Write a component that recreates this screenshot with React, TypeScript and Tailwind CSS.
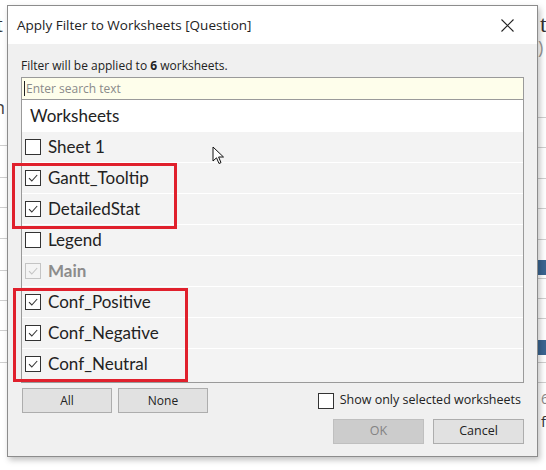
import React from 'react';

type Sheet = { name: string; checked: boolean; disabled?: boolean };

const sheets: Sheet[] = [
  { name: 'Sheet 1', checked: false },
  { name: 'Gantt_Tooltip', checked: true },
  { name: 'DetailedStat', checked: true },
  { name: 'Legend', checked: false },
  { name: 'Main', checked: true, disabled: true },
  { name: 'Conf_Positive', checked: true },
  { name: 'Conf_Negative', checked: true },
  { name: 'Conf_Neutral', checked: true },
];

const Check = ({ checked, disabled }: { checked: boolean; disabled?: boolean }) => (
  <span
    className={`flex h-[16px] w-[16px] shrink-0 items-center justify-center border ${
      disabled ? 'border-[#c4c4c4] bg-[#f4f4f4]' : 'border-[#333] bg-white'
    }`}
  >
    {checked && (
      <svg width="12" height="12" viewBox="0 0 12 12">
        <path d="M2 6.2 L4.8 9 L10.2 3" fill="none" stroke={disabled ? '#c4c4c4' : '#333'} strokeWidth="1.1" />
      </svg>
    )}
  </span>
);

const leftLines = [145, 177, 207, 238, 270, 300, 330, 362];
const rightLines = [117, 147, 178, 208, 239, 278, 298, 318, 362, 382];

export default function App() {
  return (
    <div className="relative h-[470px] w-[546px] overflow-hidden bg-white font-['Open_Sans',sans-serif] text-[#1a1a1a]">
      {/* worksheet behind the dialog */}
      <span className="absolute left-[-4px] top-[12px] font-['Liberation_Serif',serif] text-[24px] leading-none text-[#333]">t</span>
      <span className="absolute left-[-6px] top-[98px] text-[18px] leading-none text-[#444]">n</span>
      <span className="absolute left-[540px] top-[12px] font-['Liberation_Serif',serif] text-[24px] leading-none text-[#333]">t</span>
      <span className="absolute left-[538px] top-[38px] text-[18px] leading-none text-[#999]">)</span>
      <span className="absolute left-[541px] top-[392px] text-[14px] leading-none text-[#888]">6</span>
      <span className="absolute left-[541px] top-[414px] text-[15px] leading-none text-[#333]">f</span>
      {leftLines.map((y) => (
        <div key={`l${y}`} className="absolute left-0 h-px w-[8px] bg-[#cfcfcf]" style={{ top: y }} />
      ))}
      {rightLines.map((y) => (
        <div key={`r${y}`} className="absolute left-[538px] h-px w-[8px] bg-[#cfcfcf]" style={{ top: y }} />
      ))}
      <div className="absolute left-[538px] top-[260px] h-[15px] w-[8px] bg-[#3a6591]" />
      <div className="absolute left-[538px] top-[340px] h-[15px] w-[8px] bg-[#3a6591]" />

      {/* dialog */}
      <div className="absolute left-[7px] top-[5px] flex h-[452px] w-[531px] flex-col border border-[#8c8c8c] bg-[#f0f0f0] shadow-[2px_3px_6px_rgba(0,0,0,0.25)]">
        <div className="flex h-[38px] items-center justify-between bg-white pl-[9px] pr-[23px]">
          <span className="text-[13.5px] text-[#222]">Apply Filter to Worksheets [Question]</span>
          <svg width="13" height="13" viewBox="0 0 13 13">
            <path d="M0.5 0.5 L12.5 12.5 M12.5 0.5 L0.5 12.5" stroke="#222" strokeWidth="1.1" />
          </svg>
        </div>

        <div className="flex flex-1 flex-col px-[13px] pt-[13px]">
          <div className="h-[18px] text-[12px] leading-[18px] text-[#222]">
            Filter will be applied to <b>6</b> worksheets.
          </div>

          <div className="mt-[2px] flex flex-col border border-[#9a9a9a]">
            <div className="flex h-[22px] items-center border-b border-[#9a9a9a] bg-[#fefeeb] pl-[2px] text-[12px] text-[#8a8a8a]">
              <span className="mr-[1px] h-[15px] w-px bg-[#222]" />
              Enter search text
            </div>
            <div className="h-[282px] bg-[#f3f3f3] font-['Lato',sans-serif]">
              <div className="flex h-[31px] items-center bg-white pl-[8px] text-[17px] text-[#222]">Worksheets</div>
              {sheets.map((s) => (
                <div key={s.name} className="flex h-[31px] items-center gap-[7px] border-t border-white pl-[3px] text-[17px]">
                  <Check checked={s.checked} disabled={s.disabled} />
                  <span className={s.disabled ? 'font-bold text-[#8c8c8c]' : 'text-[#222]'}>{s.name}</span>
                </div>
              ))}
            </div>
          </div>

          <div className="mt-[5px] flex items-center justify-between">
            <div className="flex gap-[6px] pl-[1px]">
              <button className="h-[25px] w-[90px] border border-[#adadad] bg-[#e1e1e1] text-[12px] text-[#222]">All</button>
              <button className="h-[25px] w-[90px] border border-[#adadad] bg-[#e1e1e1] text-[12px] text-[#222]">None</button>
            </div>
            <div className="flex items-center gap-[6px] pr-[3px] text-[12.5px] text-[#222]">
              <span className="h-[16px] w-[16px] border border-[#333] bg-white" />
              Show only selected worksheets
            </div>
          </div>

          <div className="mt-[6px] flex justify-end gap-[9px]">
            <button className="h-[25px] w-[91px] border border-[#bfbfbf] bg-[#cccccc] text-[12.5px] text-[#838383]">OK</button>
            <button className="h-[25px] w-[91px] border border-[#adadad] bg-[#e1e1e1] text-[12.5px] text-[#222]">Cancel</button>
          </div>
        </div>
      </div>

      {/* highlight boxes */}
      <div className="absolute left-[12px] top-[163px] h-[66px] w-[165px] border-[3px] border-[#e0202c]" />
      <div className="absolute left-[13px] top-[288px] h-[94px] w-[175px] border-[3px] border-[#e0202c]" />

      {/* mouse pointer */}
      <svg className="absolute left-[212px] top-[146px]" width="13" height="19" viewBox="0 0 13 19">
        <path d="M1 1 L1 15 L4.5 11.8 L7 17.5 L9 16.6 L6.6 11 L11.5 11 Z" fill="white" stroke="#111" strokeWidth="1" strokeLinejoin="miter" />
      </svg>
    </div>
  );
}
